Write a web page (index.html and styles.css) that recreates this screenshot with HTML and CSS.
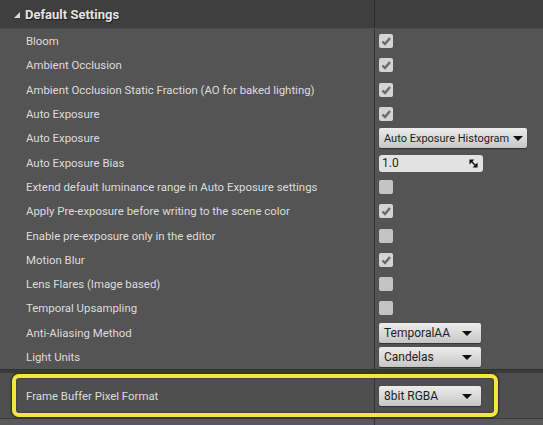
FILE: index.html
```html
<!DOCTYPE html>
<html>
<head>
<meta charset="utf-8">
<link rel="stylesheet" href="styles.css">
</head>
<body>
<div class="panel">
  <div class="header">
    <div class="hname"><span class="tri"></span>Default Settings</div>
    <div class="hval"></div>
  </div>
  <div class="rows">
    <div class="row"><div class="name">Bloom</div><div class="val"><span class="cb on"><svg viewBox="0 0 14 14"><path d="M3.5 7.5 L6 10 L11 4" /></svg></span></div></div>
    <div class="row"><div class="name">Ambient Occlusion</div><div class="val"><span class="cb on"><svg viewBox="0 0 14 14"><path d="M3.5 7.5 L6 10 L11 4" /></svg></span></div></div>
    <div class="row"><div class="name">Ambient Occlusion Static Fraction (AO for baked lighting)</div><div class="val"><span class="cb on"><svg viewBox="0 0 14 14"><path d="M3.5 7.5 L6 10 L11 4" /></svg></span></div></div>
    <div class="row"><div class="name">Auto Exposure</div><div class="val"><span class="cb on"><svg viewBox="0 0 14 14"><path d="M3.5 7.5 L6 10 L11 4" /></svg></span></div></div>
    <div class="row"><div class="name">Auto Exposure</div><div class="val"><span class="dd wide">Auto Exposure Histogram<span class="arrow"></span></span></div></div>
    <div class="row"><div class="name">Auto Exposure Bias</div><div class="val"><span class="num">1.0<svg class="spin" viewBox="0 0 10 10"><path d="M0.5 0.5 H6 L0.5 6 Z" /><path d="M9.5 9.5 H4 L9.5 4 Z" /><path d="M2 2 L8 8" class="ln"/></svg></span></div></div>
    <div class="row"><div class="name">Extend default luminance range in Auto Exposure settings</div><div class="val"><span class="cb"></span></div></div>
    <div class="row"><div class="name">Apply Pre-exposure before writing to the scene color</div><div class="val"><span class="cb on"><svg viewBox="0 0 14 14"><path d="M3.5 7.5 L6 10 L11 4" /></svg></span></div></div>
    <div class="row"><div class="name">Enable pre-exposure only in the editor</div><div class="val"><span class="cb"></span></div></div>
    <div class="row"><div class="name">Motion Blur</div><div class="val"><span class="cb on"><svg viewBox="0 0 14 14"><path d="M3.5 7.5 L6 10 L11 4" /></svg></span></div></div>
    <div class="row"><div class="name">Lens Flares (Image based)</div><div class="val"><span class="cb"></span></div></div>
    <div class="row"><div class="name">Temporal Upsampling</div><div class="val"><span class="cb"></span></div></div>
    <div class="row"><div class="name">Anti-Aliasing Method</div><div class="val"><span class="dd">TemporalAA<span class="arrow"></span></span></div></div>
    <div class="row"><div class="name">Light Units</div><div class="val"><span class="dd">Candelas<span class="arrow"></span></span></div></div>
  </div>
  <div class="sep"></div>
  <div class="row last"><div class="name">Frame Buffer Pixel Format</div><div class="val"><span class="dd">8bit RGBA<span class="arrow"></span></span></div>
    <div class="highlight"></div>
  </div>
  <div class="foot"><div class="fname"></div><div class="fval"></div></div>
</div>
</body>
</html>
```

FILE: styles.css
```css
html, body {
  margin: 0;
  padding: 0;
  background: #545454;
  width: 543px;
  height: 425px;
  overflow: hidden;
  font-family: Roboto, "Liberation Sans", sans-serif;
}
.panel {
  display: flex;
  flex-direction: column;
  width: 543px;
}
.header {
  display: flex;
  height: 28px;
  background: #3f3f3f;
  border-bottom: 1px solid #4c4c4c;
}
.hname {
  width: 374px;
  display: flex;
  align-items: center;
  color: #e4e4e4;
  font-weight: bold;
  font-size: 13px;
  text-shadow: 1px 1px 1px #1a1a1a;
}
.tri {
  width: 0;
  height: 0;
  border-left: 6px solid transparent;
  border-bottom: 6px solid #d8d8d8;
  margin: 2px 5px 0 14px;
}
.hval {
  flex: 1;
  border-left: 1px solid #2c2c2c;
}
.rows {
  display: flex;
  flex-direction: column;
}
.row {
  display: flex;
  height: 24.3px;
  align-items: stretch;
}
.name {
  width: 348px;
  padding-left: 26px;
  display: flex;
  align-items: center;
  color: #dcdcdc;
  font-size: 11.4px;
  white-space: nowrap;
}
.val {
  flex: 1;
  border-left: 1px solid #333;
  display: flex;
  align-items: center;
  padding-left: 4px;
}
.cb {
  width: 14px;
  height: 14px;
  border-radius: 2px;
  background: #c4c4c4;
  display: block;
}
.cb.on {
  background: #d4d4d4;
}
.cb svg {
  width: 14px;
  height: 14px;
  display: block;
}
.cb svg path {
  fill: none;
  stroke: #6a6a6a;
  stroke-width: 2.4;
}
.dd {
  position: relative;
  width: 102px;
  height: 20px;
  box-sizing: border-box;
  border-radius: 2px;
  background: linear-gradient(#ececec, #d6d6d6 60%, #c6c6c6);
  color: #1e1e1e;
  font-size: 12px;
  display: flex;
  align-items: center;
  padding-left: 5px;
  box-shadow: 0 1px 1px #333;
  white-space: nowrap;
}
.dd.wide {
  width: 148px;
  font-size: 11px;
}
.arrow {
  position: absolute;
  right: 9px;
  top: 8px;
  width: 0;
  height: 0;
  border-left: 5px solid transparent;
  border-right: 5px solid transparent;
  border-top: 5px solid #111;
}
.dd.wide .arrow {
  right: 4px;
}
.num {
  position: relative;
  width: 104px;
  height: 17px;
  box-sizing: border-box;
  border-radius: 3px;
  background: #e2e2e2;
  color: #1e1e1e;
  font-size: 12px;
  display: flex;
  align-items: center;
  padding-left: 3px;
  margin-top: 1px;
}
.spin {
  position: absolute;
  right: 5px;
  top: 4px;
  width: 9px;
  height: 9px;
}
.spin path { fill: #111; }
.spin path.ln { fill: none; stroke: #111; stroke-width: 1.6; }
.sep {
  height: 3px;
  background: #3a3a3a;
  border-top: 1px solid #303030;
}
.row.last {
  position: relative;
  height: 45px;
  background: #4f4f4f;
}
.highlight {
  position: absolute;
  left: 12px;
  top: 1px;
  width: 486px;
  height: 43px;
  box-sizing: border-box;
  border: 4px solid #f3e83a;
  border-radius: 7px;
  box-shadow: 0 0 2px 1px #2a2a2a, inset 0 0 2px #2a2a2a;
  pointer-events: none;
}
.foot {
  display: flex;
  height: 6px;
  border-top: 1px solid #3a3a3a;
  background: #595959;
}
.fname { width: 374px; }
.fval { flex: 1; border-left: 1px solid #333; }
```
